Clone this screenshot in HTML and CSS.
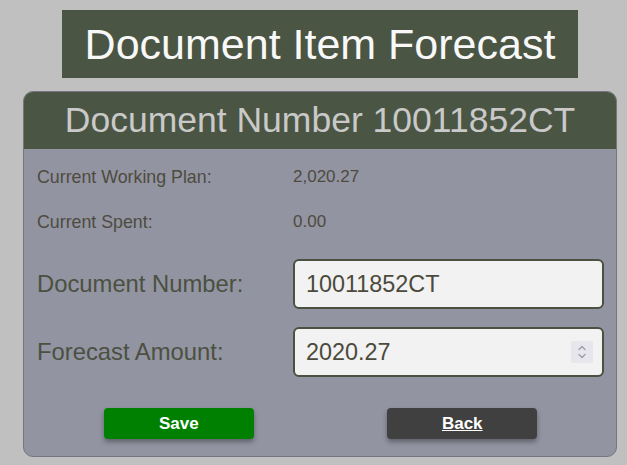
FILE: index.html
```html
<!DOCTYPE html>
<html>
<head>
<meta charset="utf-8">
<link rel="stylesheet" href="styles.css">
</head>
<body>
<div class="page">
  <h1 class="title">Document Item Forecast</h1>
  <div class="card">
    <div class="card-header">Document Number 10011852CT</div>
    <div class="card-body">
      <div class="info-row">
        <span class="info-label">Current Working Plan:</span>
        <span class="info-value">2,020.27</span>
      </div>
      <div class="info-row">
        <span class="info-label">Current Spent:</span>
        <span class="info-value">0.00</span>
      </div>
      <div class="form-row first">
        <label class="form-label">Document Number:</label>
        <input class="form-input" type="text" value="10011852CT">
      </div>
      <div class="form-row">
        <label class="form-label">Forecast Amount:</label>
        <div class="num-wrap">
          <input class="form-input" type="text" value="2020.27">
          <span class="spinner">
            <svg width="22" height="22" viewBox="0 0 22 22">
              <path d="M8 8.5 L11 5.5 L14 8.5" fill="none" stroke="#9a9aa2" stroke-width="1.2" stroke-linecap="round" stroke-linejoin="round"/>
              <path d="M8 13.5 L11 16.5 L14 13.5" fill="none" stroke="#9a9aa2" stroke-width="1.2" stroke-linecap="round" stroke-linejoin="round"/>
            </svg>
          </span>
        </div>
      </div>
      <div class="buttons">
        <div class="btn-cell"><button class="btn btn-save">Save</button></div>
        <div class="btn-cell"><button class="btn btn-back">Back</button></div>
      </div>
    </div>
  </div>
</div>
</body>
</html>
```
FILE: styles.css
```css
html, body {
  margin: 0;
  padding: 0;
  background: #c0c0c0;
  font-family: "Liberation Sans", Arial, sans-serif;
}
.page {
  width: 627px;
  height: 465px;
  padding-top: 10px;
  padding-left: 13px;
  box-sizing: border-box;
  display: flex;
  flex-direction: column;
  align-items: center;
}
.title {
  margin: 0;
  width: 516px;
  height: 68px;
  background: #4b5543;
  color: #f8f8f8;
  font-weight: normal;
  font-size: 43px;
  display: flex;
  align-items: center;
  justify-content: center;
}
.card {
  margin-top: 13px;
  width: 594px;
  box-sizing: border-box;
  border: 1px solid #75757d;
  border-radius: 10px;
  background: #9294a2;
  overflow: hidden;
}
.card-header {
  height: 57px;
  background: #4b5543;
  color: #c9c9c9;
  font-size: 35.5px;
  display: flex;
  align-items: center;
  justify-content: center;
}
.card-body {
  padding: 8px 12px 17px 13px;
}
.info-row {
  display: grid;
  grid-template-columns: 256px 1fr;
  height: 40px;
  align-items: center;
  margin-bottom: 5px;
  color: #4e4b3e;
  font-size: 17.8px;
}
.info-value {
  font-size: 17px;
}
.form-row {
  display: grid;
  grid-template-columns: 256px 1fr;
  height: 50px;
  align-items: center;
  margin-bottom: 18px;
}
.form-row.first {
  margin-top: 17px;
}
.form-label {
  color: #4b5040;
  font-size: 23.8px;
}
.form-input {
  width: 100%;
  height: 50px;
  box-sizing: border-box;
  border: 2px solid #4b5040;
  border-radius: 6px;
  background: #f2f2f2;
  color: #4b4a3c;
  font-family: "Liberation Sans", Arial, sans-serif;
  font-size: 23.4px;
  padding: 0 0 0 11px;
  outline: none;
}
.num-wrap {
  position: relative;
  height: 50px;
}
.spinner {
  position: absolute;
  right: 11px;
  top: 14px;
  width: 22px;
  height: 22px;
  background: #e6e6ec;
  border-radius: 2px;
}
.spinner svg {
  display: block;
}
.buttons {
  display: grid;
  grid-template-columns: 1fr 1fr;
  margin-top: 31px;
}
.btn-cell {
  display: flex;
  justify-content: center;
}
.btn {
  width: 150px;
  height: 31px;
  border: none;
  border-radius: 4px;
  color: #ffffff;
  font-family: "Liberation Sans", Arial, sans-serif;
  font-weight: bold;
  font-size: 17px;
  box-shadow: 0 3px 5px rgba(0, 0, 0, 0.35);
  padding: 0;
}
.btn-save {
  background: #008000;
}
.btn-back {
  background: #404040;
  text-decoration: underline;
}
```
